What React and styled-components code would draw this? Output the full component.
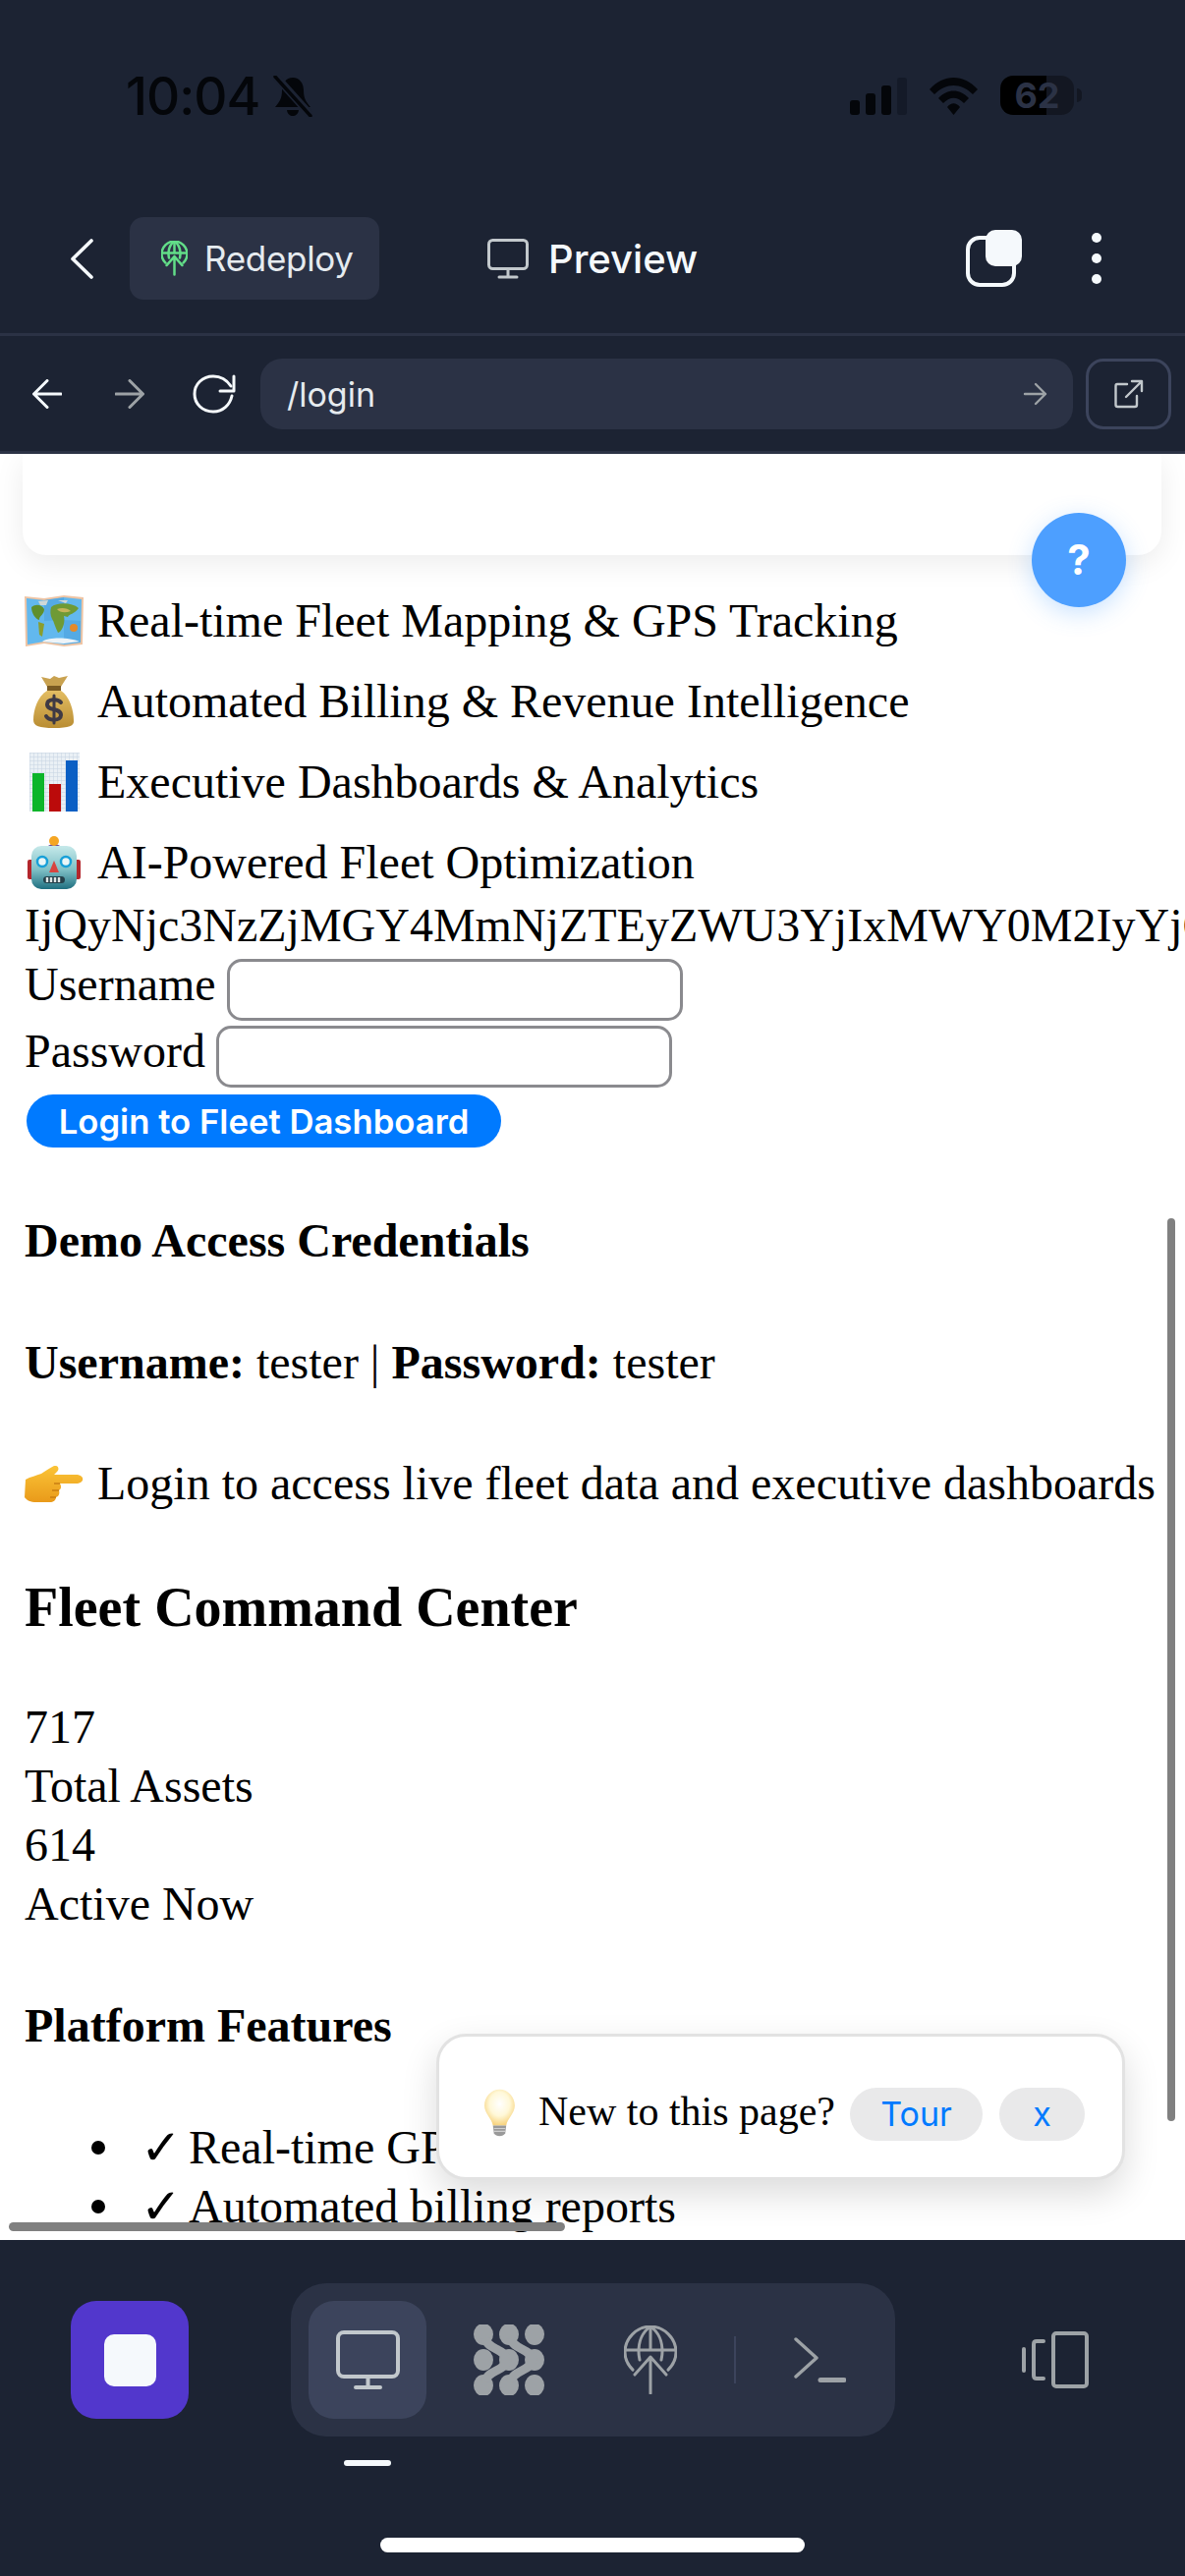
import React from 'react';
import styled, { createGlobalStyle } from 'styled-components';

const GlobalStyle = createGlobalStyle`
  html, body { margin: 0; padding: 0; background: #1c2333; }
  * { box-sizing: border-box; }
`;

const Phone = styled.div`
  width: 1206px;
  height: 2622px;
  display: flex;
  flex-direction: column;
  overflow: hidden;
  background: #1c2333;
  font-family: Inter, "Liberation Sans", sans-serif;
  color: #f5f9fc;
`;

/* status bar */
const StatusBar = styled.div`
  height: 221px;
  flex: none;
  display: flex;
  align-items: flex-start;
  padding: 67px 113px 0 128px;
`;
const Clock = styled.div`
  font-size: 53px;
  line-height: 62px;
  font-weight: 500;
  color: #04060a;
  letter-spacing: -1px;
`;
const StatusIcons = styled.div`
  margin-left: auto;
  display: flex;
  align-items: flex-start;
  padding-top: 10px;
  gap: 23px;
`;
const Battery = styled.div`
  position: relative;
  width: 75px;
  height: 40px;
  border-radius: 13px;
  background: linear-gradient(90deg, #000 0 47px, #131722 47px);
  color: #2b3245;
  font-size: 36px;
  font-weight: 700;
  line-height: 40px;
  text-align: center;
  &::after {
    content: '';
    position: absolute;
    right: -8px;
    top: 13px;
    width: 5px;
    height: 14px;
    border-radius: 0 5px 5px 0;
    background: #131722;
  }
`;

/* nav */
const NavBar = styled.div`
  height: 118px;
  flex: none;
  display: flex;
  align-items: flex-start;
  padding: 0 85px 0 72px;
  border-bottom: 0;
`;
const BackIcon = styled.div`
  width: 23px;
  height: 84px;
  display: flex;
  align-items: center;
`;
const RedeployButton = styled.div`
  margin-left: 37px;
  width: 254px;
  height: 84px;
  border-radius: 14px;
  background: #2b3245;
  display: flex;
  align-items: center;
  padding-left: 32px;
  gap: 17px;
  font-size: 35px;
  letter-spacing: -0.3px;
  color: #e6ebef;
`;
const PreviewTitle = styled.div`
  margin-left: 110px;
  height: 84px;
  display: flex;
  align-items: center;
  gap: 20px;
  font-size: 40px;
  font-weight: 500;
`;
const NavActions = styled.div`
  margin-left: auto;
  height: 84px;
  display: flex;
  align-items: center;
  gap: 71px;
`;
const Divider = styled.div`
  height: 3px;
  flex: none;
  background: #2b3245;
`;

/* url bar */
const UrlBar = styled.div`
  height: 120px;
  flex: none;
  display: flex;
  align-items: flex-start;
  padding: 23px 14px 0 33px;
  border-bottom: 3px solid #2b3245;
`;
const UrlIcon = styled.div`
  height: 72px;
  display: flex;
  align-items: center;
  margin-left: ${(p) => p.$left || 0}px;
`;
const UrlField = styled.div`
  margin-left: 25px;
  width: 827px;
  height: 72px;
  border-radius: 22px;
  background: #2b3245;
  display: flex;
  align-items: center;
  justify-content: space-between;
  padding: 0 26px 0 27px;
  font-size: 34px;
  color: #e6ebef;
`;
const OpenButton = styled.div`
  margin-left: 13px;
  width: 87px;
  height: 72px;
  border: 3px solid #3c445c;
  border-radius: 18px;
  display: flex;
  align-items: center;
  justify-content: center;
`;

/* page */
const Viewport = styled.div`
  position: relative;
  flex: 1;
  background: #fff;
  overflow: hidden;
  color: #000;
  font-family: "Liberation Serif", "Times New Roman", serif;
  font-size: 48px;
  line-height: 60px;
  padding: 0 0 0 25px;
`;
const CroppedCard = styled.div`
  margin-left: -2px;
  width: 1159px;
  height: 103px;
  background: #fff;
  border-radius: 0 0 24px 24px;
  box-shadow: 0 8px 30px rgba(0, 0, 0, 0.08);
`;
const HelpButton = styled.div`
  position: absolute;
  left: 1050px;
  top: 60px;
  width: 96px;
  height: 96px;
  border-radius: 50%;
  background: #4d9fff;
  color: #fff;
  display: flex;
  align-items: center;
  justify-content: center;
  font-family: Inter, "Liberation Sans", sans-serif;
  font-size: 42px;
  font-weight: 700;
  box-shadow: 0 6px 24px rgba(77, 159, 255, 0.3);
`;
const FeatureList = styled.div`
  margin-top: 15px;
`;
const FeatureRow = styled.div`
  padding-top: 22px;
  height: 82px;
  display: flex;
  align-items: center;
  white-space: nowrap;
`;
const Emoji = styled.span`
  flex: none;
  width: 60px;
  height: 60px;
  margin-right: 14px;
  display: flex;
  align-items: center;
  justify-content: center;
`;
const Token = styled.div`
  margin-top: 4px;
  white-space: nowrap;
`;
const FieldRow = styled.label`
  margin-top: ${(p) => p.$top}px;
  display: flex;
  align-items: center;
  gap: 11px;
  height: 63px;
`;
const FieldName = styled.span`
  position: relative;
  top: -6px;
`;
const TextInput = styled.input`
  width: 464px;
  height: 63px;
  border: 3px solid #8a8a8e;
  border-radius: 15px;
  background: #fff;
  outline: none;
`;
const LoginButton = styled.button`
  display: block;
  margin: 7px 0 0 2px;
  width: 483px;
  height: 54px;
  border: 0;
  border-radius: 27px;
  background: #007aff;
  color: #fff;
  font-family: Inter, "Liberation Sans", sans-serif;
  font-size: 34.7px;
  font-weight: 600;
  padding: 0;
`;
const Block = styled.div`
  margin-top: ${(p) => p.$top}px;
  font-weight: ${(p) => (p.$bold ? 700 : 400)};
  white-space: nowrap;
`;
const LoginNote = styled(Block)`
  display: flex;
  align-items: center;
`;
const SectionTitle = styled.h2`
  margin: 51px 0 0;
  font-size: 56px;
  line-height: 90px;
  font-weight: 700;
`;
const Checklist = styled.ul`
  margin: 64px 0 0;
  padding: 0 0 0 68px;
  list-style: none;
  white-space: nowrap;
`;
const CheckItem = styled.li`
  display: flex;
  align-items: center;
  &::before {
    content: '';
    flex: none;
    width: 14px;
    height: 14px;
    margin-right: 36px;
    border-radius: 50%;
    background: #000;
  }
`;
const CheckMark = styled.span`
  flex: none;
  width: 35px;
  margin-right: 14px;
  font-family: "DejaVu Sans", sans-serif;
  font-weight: 700;
  font-size: 50px;
  line-height: 60px;
`;
const VScroll = styled.div`
  position: absolute;
  left: 1188px;
  top: 778px;
  width: 8px;
  height: 919px;
  border-radius: 4px;
  background: #808080;
`;
const HScroll = styled.div`
  position: absolute;
  left: 9px;
  top: 1800px;
  width: 566px;
  height: 9px;
  border-radius: 5px;
  background: #808080;
`;
const TourPopup = styled.div`
  position: absolute;
  left: 444px;
  top: 1608px;
  width: 701px;
  height: 149px;
  background: #fff;
  border: 3px solid #e2e2e2;
  border-radius: 30px;
  box-shadow: 0 14px 36px rgba(0, 0, 0, 0.14);
  display: flex;
  align-items: center;
  padding: 14px 38px 0 46px;
  font-size: 42px;
  line-height: 54px;
  white-space: nowrap;
`;
const TourText = styled.span`
  margin-left: 24px;
  margin-top: -6px;
`;
const Pill = styled.span`
  flex: none;
  margin-left: ${(p) => p.$left}px;
  width: ${(p) => p.$width}px;
  height: 54px;
  border-radius: 27px;
  background: #e9e9ea;
  color: #007aff;
  display: flex;
  align-items: center;
  justify-content: center;
  font-family: Inter, "Liberation Sans", sans-serif;
  font-size: 34px;
`;

/* bottom */
const BottomBar = styled.div`
  position: relative;
  height: 342px;
  flex: none;
  padding: 44px 0 0 72px;
  display: flex;
  align-items: flex-start;
`;
const StopButton = styled.div`
  margin-top: 18px;
  width: 120px;
  height: 120px;
  border-radius: 26px;
  background: #5237cc;
  display: flex;
  align-items: center;
  justify-content: center;
  &::before {
    content: '';
    width: 53px;
    height: 53px;
    border-radius: 10px;
    background: #f5f9fc;
  }
`;
const TabGroup = styled.div`
  margin-left: 104px;
  width: 615px;
  height: 156px;
  border-radius: 36px;
  background: #2b3245;
  display: flex;
  align-items: center;
  padding-left: 18px;
`;
const Tab = styled.div`
  position: relative;
  flex: none;
  width: ${(p) => p.$width}px;
  height: 120px;
  margin-left: ${(p) => p.$left || 0}px;
  border-radius: 26px;
  background: ${(p) => (p.$active ? '#3c445c' : 'transparent')};
  display: flex;
  align-items: center;
  justify-content: center;
`;
const ActiveMark = styled.div`
  position: absolute;
  left: 36px;
  bottom: -48px;
  width: 48px;
  height: 6px;
  border-radius: 3px;
  background: #f5f9fc;
`;
const TabDivider = styled.div`
  flex: none;
  width: 2px;
  height: 48px;
  margin-left: 58px;
  background: #3c445c;
`;
const DevicePicker = styled.div`
  margin: 49px 0 0 129px;
`;
const HomeBar = styled.div`
  position: absolute;
  left: 387px;
  bottom: 24px;
  width: 432px;
  height: 15px;
  border-radius: 8px;
  background: #fff;
`;

const Stroke = ({ w, h, c = '#f5f9fc', sw = 3, children, vb }) => (
  <svg width={w} height={h} viewBox={vb || `0 0 ${w} ${h}`} fill="none" stroke={c} strokeWidth={sw} strokeLinecap="round" strokeLinejoin="round">
    {children}
  </svg>
);

const MapEmoji = () => (
  <svg width="60" height="52" viewBox="0 0 60 52">
    <path d="M0 1 L20 3 L40 0 L60 2 L59 50 L40 52 L20 49 L1 52 Z" fill="#eec4a4" />
    <path d="M2 3 L20 5 L40 2 L58 4 L57 48 L40 50 L20 47 L3 50 Z" fill="#62b8ee" />
    <path d="M20 5 L40 2 L40 25 L20 26 Z M40 25 L57 26 L57 48 L40 50 Z" fill="#4a9fdc" opacity=".55" />
    <path d="M7 12 C12 8 18 10 20 14 C20 20 15 20 15 25 C11 24 7 18 7 12 Z" fill="#5f8f2d" />
    <path d="M14 27 L20 29 L18 42 L15 40 Z" fill="#8a9e2e" />
    <path d="M27 12 C33 7 48 7 55 13 C50 20 46 18 44 22 L40 21 C42 29 37 38 34 38 C31 32 30 27 28 24 C26 20 26 16 27 12 Z" fill="#6f9a35" />
    <path d="M33 14 C38 12 44 13 47 16 C42 18 36 18 33 14 Z" fill="#c7b45a" />
    <path d="M14 6 L24 5 L22 10 L16 10 Z M34 5 L44 5 L42 8 Z" fill="#cfd8d8" />
    <circle cx="50" cy="33" r="4" fill="#e58a2a" />
    <path d="M18 47 C26 42 46 43 56 47 L40 49 Z" fill="#eef4f8" />
  </svg>
);

const BagEmoji = () => (
  <svg width="42" height="54" viewBox="0 0 42 54">
    <defs>
      <linearGradient id="bagFill" x1="0" y1="0" x2="0" y2="1">
        <stop offset="0" stopColor="#e3bd63" />
        <stop offset="1" stopColor="#b98d33" />
      </linearGradient>
    </defs>
    <path d="M8 2 L17 4 L21 1 L26 3 L35 1 L28 12 L14 12 Z" fill="#c9a250" />
    <path d="M14 11 H28 V16 H14 Z" fill="#7a5a22" />
    <path d="M14 16 C4 22 0 36 0 46 C0 52 6 54 21 54 C36 54 42 52 41 46 C41 36 37 22 28 16 Z" fill="url(#bagFill)" />
    <g fill="none" stroke="#3f3a44" strokeWidth="4" strokeLinecap="round">
      <path d="M28 28 C25 24 14 24 14 30 C14 37 28 33 28 41 C28 47 16 47 13 42" />
      <path d="M21 21 V49" strokeWidth="3" />
    </g>
  </svg>
);

const ChartEmoji = () => (
  <svg width="51" height="60" viewBox="0 0 51 60">
    <defs>
      <pattern id="chartGrid" width="4" height="4" patternUnits="userSpaceOnUse">
        <path d="M4 0 H0 V4" fill="none" stroke="#c3d2e2" strokeWidth="1" />
      </pattern>
    </defs>
    <rect width="51" height="60" fill="#eaf0f5" />
    <rect width="51" height="60" fill="url(#chartGrid)" />
    <rect x="3" y="21" width="12" height="39" fill="#0cb52a" />
    <rect x="20" y="32" width="12" height="28" fill="#bb0a0a" />
    <rect x="37" y="8" width="12" height="52" fill="#0a5fc4" />
  </svg>
);

const RobotEmoji = () => (
  <svg width="54" height="54" viewBox="0 0 54 54">
    <defs>
      <linearGradient id="robotHead" x1="0" y1="0" x2="0" y2="1">
        <stop offset="0" stopColor="#c6e9ea" />
        <stop offset=".55" stopColor="#7fc0c6" />
        <stop offset="1" stopColor="#1f6f80" />
      </linearGradient>
    </defs>
    <rect x="0" y="24" width="8" height="20" rx="2" fill="#b3262c" />
    <rect x="46" y="24" width="8" height="20" rx="2" fill="#b3262c" />
    <path d="M20 12 C20 7 34 7 34 12 Z" fill="#6b4c9a" />
    <circle cx="27" cy="5" r="5" fill="#f5a623" />
    <rect x="4" y="10" width="46" height="44" rx="10" fill="url(#robotHead)" />
    <circle cx="15" cy="26" r="5" fill="#eaf6f7" stroke="#18a0d8" strokeWidth="2.5" />
    <circle cx="39" cy="26" r="5" fill="#eaf6f7" stroke="#18a0d8" strokeWidth="2.5" />
    <path d="M27 25 L32 37 H22 Z" fill="#d8443f" />
    <rect x="16" y="41" width="22" height="7" rx="3.5" fill="#24404a" />
    <path d="M20 42 V47 M24 42 V47 M28 42 V47 M32 42 V47" stroke="#dfe6e6" strokeWidth="2.4" />
  </svg>
);

const HandEmoji = () => (
  <svg width="60" height="37" viewBox="0 0 60 37">
    <defs>
      <linearGradient id="handFill" x1="0" y1="0" x2="0" y2="1">
        <stop offset="0" stopColor="#fbc437" />
        <stop offset="1" stopColor="#e99a1a" />
      </linearGradient>
    </defs>
    <path d="M1 14 C6 11 12 10 17 8 C21 5 25 3 30 0 C34 -1 36 3 33 6 L30 9 L54 9 C61 10 61 17 54 18 L36 18 C38 21 37 24 35 25 C36 28 35 31 32 32 C32 35 29 37 26 37 L12 37 C6 37 2 35 0 32 Z" fill="url(#handFill)" />
    <path d="M30 18 H36 M28 25 H35 M26 32 H32" stroke="#c97d12" strokeWidth="1.5" fill="none" />
  </svg>
);

const BulbEmoji = () => (
  <svg width="32" height="51" viewBox="0 0 32 51">
    <defs>
      <radialGradient id="bulbGlow" cx=".5" cy=".4" r=".6">
        <stop offset="0" stopColor="#ffffff" />
        <stop offset=".55" stopColor="#fff8d8" />
        <stop offset="1" stopColor="#f7d27c" />
      </radialGradient>
    </defs>
    <path d="M16 0 C7 0 0 8 0 17 C0 25 8 31 9 38 H23 C24 31 32 25 32 17 C32 8 25 0 16 0 Z" fill="url(#bulbGlow)" />
    <path d="M9 38 H23 L22 46 C20 50 12 50 10 46 Z" fill="#9a9a9a" />
    <path d="M10 41 H22 M10 44 H22" stroke="#d0d0d0" strokeWidth="1.2" />
  </svg>
);

const GlobeUp = ({ size, c, sw }) => (
  <Stroke w={size} h={size * 1.3} vb="0 0 54 70" c={c} sw={sw}>
    <path d="M9 45 C4 40 1 34 1 27 C1 13 13 1 27 1 C41 1 53 13 53 27 C53 34 50 40 45 45" />
    <path d="M27 1 C17 8 15 17 15 27 C15 30 15.500 32 16 35 M27 1 C37 8 39 17 39 27 C39 30 38.500 32 38 35" />
    <path d="M1 25 H53 M27 1 V25" />
    <path d="M11 50 L27 32 L43 50 M27 32 V69" />
  </Stroke>
);

const PackagesIcon = () => (
  <svg width="72" height="72" viewBox="0 0 72 72">
    <g fill="#9da2a6">
      {[10, 36, 62].map((cy) => [10, 36, 62].map((cx) => (
        <ellipse key={`${cx}-${cy}`} cx={cx} cy={cy} rx="10" ry="11" />
      )))}
    </g>
    <g fill="none" stroke="#9da2a6" strokeWidth="9">
      <path d="M12 14 C14 26 32 24 34 36 C32 48 14 46 12 58" />
      <path d="M38 14 C40 26 58 24 60 36 C58 48 40 46 38 58" />
    </g>
  </svg>
);

const Features = ['Real-time Fleet Mapping & GPS Tracking', 'Automated Billing & Revenue Intelligence', 'Executive Dashboards & Analytics', 'AI-Powered Fleet Optimization'];
const FeatureIcons = [MapEmoji, BagEmoji, ChartEmoji, RobotEmoji];

export default function App() {
  return (
    <Phone>
      <GlobalStyle />
      <StatusBar>
        <Clock>10:04</Clock>
        <svg width="40" height="42" viewBox="0 0 40 42" style={{ marginLeft: 14, marginTop: 10 }}>
          <path d="M20 2 C27 2 31 8 31 15 C31 24 34 27 38 32 H2 C6 27 9 24 9 15 C9 8 13 2 20 2 Z M14 35 H26 C25 43 15 43 14 35 Z" fill="#04060a" />
          <path d="M3 1 L38 40" stroke="#1c2333" strokeWidth="8" />
          <path d="M2 1 L38 41" stroke="#04060a" strokeWidth="3.4" strokeLinecap="round" />
        </svg>
        <StatusIcons>
          <svg width="58" height="38" viewBox="0 0 58 38" style={{ marginTop: 2 }}>
            <rect x="0" y="23" width="10" height="15" rx="3" fill="#04060a" />
            <rect x="16" y="16" width="10" height="22" rx="3" fill="#04060a" />
            <rect x="32" y="8" width="10" height="30" rx="3" fill="#04060a" />
            <rect x="48" y="0" width="10" height="38" rx="3" fill="#141a28" />
          </svg>
          <svg width="49" height="38" viewBox="0 0 49 38" style={{ marginTop: 2 }}>
            <path d="M0 12 C14 -4 35 -4 49 12 L44 17 C32 5 17 5 5 17 Z M9 21 C18 11 31 11 40 21 L35 26 C28 19 21 19 14 26 Z M18 30 C22 25 27 25 31 30 L24.500 38 Z" fill="#04060a" />
          </svg>
          <Battery>62</Battery>
        </StatusIcons>
      </StatusBar>

      <NavBar>
        <BackIcon>
          <Stroke w={23} h={41} sw={3.6}><path d="M21 2 L2 20.500 L21 39" /></Stroke>
        </BackIcon>
        <RedeployButton>
          <GlobeUp size={27} c="#62dd88" sw={5} />
          Redeploy
        </RedeployButton>
        <PreviewTitle>
          <Stroke w={42} h={41} c="#c2c8cc" sw={3}>
            <rect x="1.500" y="1.500" width="39" height="29" rx="4" />
            <path d="M21 31 V38 M12 39 H30" />
          </Stroke>
          Preview
        </PreviewTitle>
        <NavActions>
          <svg width="57" height="58" viewBox="0 0 57 58">
            <rect x="2" y="8" width="47" height="48" rx="12" fill="none" stroke="#f5f9fc" strokeWidth="4" />
            <rect x="20" y="0" width="37" height="37" rx="10" fill="#f5f9fc" />
          </svg>
          <svg width="10" height="52" viewBox="0 0 10 52">
            <circle cx="5" cy="5" r="5" fill="#f5f9fc" />
            <circle cx="5" cy="26" r="5" fill="#f5f9fc" />
            <circle cx="5" cy="47" r="5" fill="#f5f9fc" />
          </svg>
        </NavActions>
      </NavBar>
      <Divider />

      <UrlBar>
        <UrlIcon>
          <Stroke w={30} h={30} sw={3}><path d="M15 1.500 L1.500 15 L15 28.500 M1.500 15 H29" /></Stroke>
        </UrlIcon>
        <UrlIcon $left={54}>
          <Stroke w={30} h={30} c="#9da2a6" sw={3}><path d="M15 1.500 L28.500 15 L15 28.500 M28.500 15 H1" /></Stroke>
        </UrlIcon>
        <UrlIcon $left={49}>
          <Stroke w={44} h={40} sw={3}>
            <path d="M40 22 C38 31 31 38 21 38 C10 38 2 30 2 20 C2 10 10 2 21 2 C29 2 35 6 39 12" />
            <path d="M42 2 V17 H28" />
          </Stroke>
        </UrlIcon>
        <UrlField>
          /login
          <Stroke w={25} h={24} c="#9da2a6" sw={2.4}><path d="M13 2 L23 12 L13 22 M23 12 H2" /></Stroke>
        </UrlField>
        <OpenButton>
          <Stroke w={30} h={30} c="#c2c8cc" sw={2.4}>
            <path d="M13 5 H3 C2 5 1.500 6 1.500 7 V26 C1.500 27.500 2 28 3.500 28 H21 C22 28 23 27.500 23 26 V17" />
            <path d="M12 18 L28 2 M18 2 H28 V12" />
          </Stroke>
        </OpenButton>
      </UrlBar>

      <Viewport>
        <CroppedCard />
        <FeatureList>
          {Features.map((text, i) => {
            const Icon = FeatureIcons[i];
            return (
              <FeatureRow key={text}>
                <Emoji><Icon /></Emoji>
                {text}
              </FeatureRow>
            );
          })}
        </FeatureList>
        <Token>IjQyNjc3NzZjMGY4MmNjZTEyZWU3YjIxMWY0M2IyYjQ0NzZjMGY4</Token>
        <FieldRow $top={4}>
          <FieldName>Username</FieldName>
          <TextInput />
        </FieldRow>
        <FieldRow $top={5}>
          <FieldName>Password</FieldName>
          <TextInput />
        </FieldRow>
        <LoginButton>Login to Fleet Dashboard</LoginButton>
        <Block $top={65} $bold>Demo Access Credentials</Block>
        <Block $top={64}><b>Username:</b> tester | <b>Password:</b> tester</Block>
        <LoginNote $top={63}>
          <Emoji><HandEmoji /></Emoji>
          Login to access live fleet data and executive dashboards
        </LoginNote>
        <SectionTitle>Fleet Command Center</SectionTitle>
        <Block $top={47}>717</Block>
        <Block $top={0}>Total Assets</Block>
        <Block $top={0}>614</Block>
        <Block $top={0}>Active Now</Block>
        <Block $top={64} $bold>Platform Features</Block>
        <Checklist>
          <CheckItem><CheckMark>✓</CheckMark>Real-time GPS tracking</CheckItem>
          <CheckItem><CheckMark>✓</CheckMark>Automated billing reports</CheckItem>
        </Checklist>

        <HelpButton>?</HelpButton>
        <VScroll />
        <HScroll />
        <TourPopup>
          <BulbEmoji />
          <TourText>New to this page?</TourText>
          <Pill $left={15} $width={135}>Tour</Pill>
          <Pill $left={17} $width={87}>x</Pill>
        </TourPopup>
      </Viewport>

      <BottomBar>
        <StopButton />
        <TabGroup>
          <Tab $active $width={120}>
            <Stroke w={65} h={60} c="#c2c8cc" sw={4}>
              <rect x="2" y="2" width="61" height="45" rx="6" />
              <path d="M32.500 47 V56 M20 58 H45" />
            </Stroke>
            <ActiveMark />
          </Tab>
          <Tab $width={72} $left={48}>
            <PackagesIcon />
          </Tab>
          <Tab $width={54} $left={81}>
            <GlobeUp size={54} c="#9da2a6" sw={3} />
          </Tab>
          <TabDivider />
          <Tab $width={53} $left={59}>
            <Stroke w={53} h={46} c="#9da2a6" sw={3.4}>
              <path d="M2 2 L23 21 L2 40" />
              <path d="M27 43.500 H51" strokeWidth="5" />
            </Stroke>
          </Tab>
        </TabGroup>
        <DevicePicker>
          <Stroke w={68} h={58} c="#9da2a6" sw={4}>
            <rect x="32" y="2" width="34" height="54" rx="3" />
            <path d="M22 10 H15 C13 10 12 11 12 13 V45 C12 47 13 48 15 48 H22" />
            <path d="M2 18 V40" />
          </Stroke>
        </DevicePicker>
        <HomeBar />
      </BottomBar>
    </Phone>
  );
}
